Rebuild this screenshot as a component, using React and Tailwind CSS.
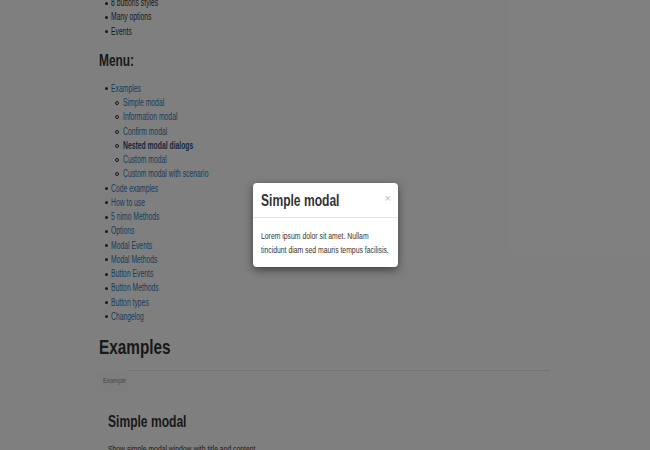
import React from 'react';

const FONT = { fontFamily: '"Liberation Sans", Arial, sans-serif' };

const features = ['8 buttons styles', 'Many options', 'Events'];

const examples = [
  { label: 'Simple modal' },
  { label: 'Information modal' },
  { label: 'Confirm modal' },
  { label: 'Nested modal dialogs', active: true },
  { label: 'Custom modal' },
  { label: 'Custom modal with scenario' },
];

const menu = [
  'Code examples',
  'How to use',
  '5 nimo Methods',
  'Options',
  'Modal Events',
  'Modal Methods',
  'Button Events',
  'Button Methods',
  'Button types',
  'Changelog',
];

// the page text is drawn in a condensed face, so squeeze it sideways
const Cond = ({ className = 'scale-x-[0.68]', children }) => (
  <span className={`inline-block origin-left whitespace-nowrap ${className}`}>{children}</span>
);

const Disc = () => <span className="w-[3px] h-[3px] rounded-full bg-[#333] shrink-0" />;
const Circle = () => <span className="w-[4px] h-[4px] rounded-full border border-[#333] shrink-0" />;

const Item = ({ children, link, nested, active }) => (
  <li className={`flex items-center ${nested ? 'pl-[16px] gap-[4px]' : 'pl-[6px] gap-[3px]'}`}>
    {nested ? <Circle /> : <Disc />}
    <span
      className={
        active ? 'text-[#23527c] font-bold' : link ? 'text-[#337ab7]' : 'text-[#333]'
      }
    >
      <Cond>{children}</Cond>
    </span>
  </li>
);

const SimpleModal = () => (
  <div className="w-[145px] bg-white rounded-[4px] shadow-[0_3px_9px_rgba(0,0,0,0.5)]">
    <div className="flex items-center justify-between h-[35px] px-[8px] border-b border-[#e5e5e5]">
      <h4 className="text-[17px] font-bold text-[#333] leading-none">
        <Cond className="scale-x-[0.71]">Simple modal</Cond>
      </h4>
      <span className="text-[10px] text-[#bbb] leading-none -mr-[1px] -mt-[3px]">×</span>
    </div>
    <div className="px-[8px] pt-[11px] pb-[10px] text-[9.5px] leading-[14px] text-[#333]">
      <span className="block">
        <Cond className="scale-x-[0.72]">Lorem ipsum dolor sit amet. Nullam</Cond>
      </span>
      <span className="block">
        <Cond className="scale-x-[0.72]">tincidunt diam sed mauris tempus facilisis.</Cond>
      </span>
    </div>
  </div>
);

export default function App() {
  return (
    <div className="relative w-[650px] h-[450px] overflow-hidden bg-white" style={FONT}>
      <div className="pl-[99px] w-[550px]">
        <ul className="-mt-[4px] text-[10px] leading-[14.25px]">
          {features.map(f => (
            <Item key={f}>{f}</Item>
          ))}
        </ul>

        <h3 className="mt-[12px] text-[17px] font-bold leading-[20px] text-[#333]">
          <Cond className="scale-x-[0.7]">Menu:</Cond>
        </h3>

        <ul className="mt-[11px] text-[10px] leading-[14.25px]">
          <Item link>Examples</Item>
          {examples.map(e => (
            <Item key={e.label} link nested active={e.active}>
              {e.label}
            </Item>
          ))}
          {menu.map(m => (
            <Item key={m} link>
              {m}
            </Item>
          ))}
        </ul>

        <h2 className="mt-[10px] text-[21px] font-bold leading-[26px] text-[#333]">
          <Cond className="scale-x-[0.73]">Examples</Cond>
        </h2>

        <div className="mt-[10px] flex -ml-[2px]">
          <div className="w-[31px] h-[22px] flex items-center pl-[6px] bg-[#fafafa]">
            <span className="text-[7px] text-[#959595]">
              <Cond className="scale-x-[0.85]">Example</Cond>
            </span>
          </div>
          <div className="flex-1 border-t border-[#e5e5e5]" />
        </div>

        <div className="pl-[9px]">
          <h3 className="mt-[19px] text-[17px] font-bold leading-[22px] text-[#333]">
            <Cond className="scale-x-[0.71]">Simple modal</Cond>
          </h3>
          <p className="mt-[10px] text-[8.5px] leading-[12px] text-[#333]">
            <Cond className="scale-x-[0.8]">Show simple modal window with title and content</Cond>
          </p>
        </div>
      </div>

      {/* backdrop */}
      <div className="absolute inset-0 bg-black/50" />

      <div className="absolute inset-0 flex items-center justify-center">
        <SimpleModal />
      </div>
    </div>
  );
}
